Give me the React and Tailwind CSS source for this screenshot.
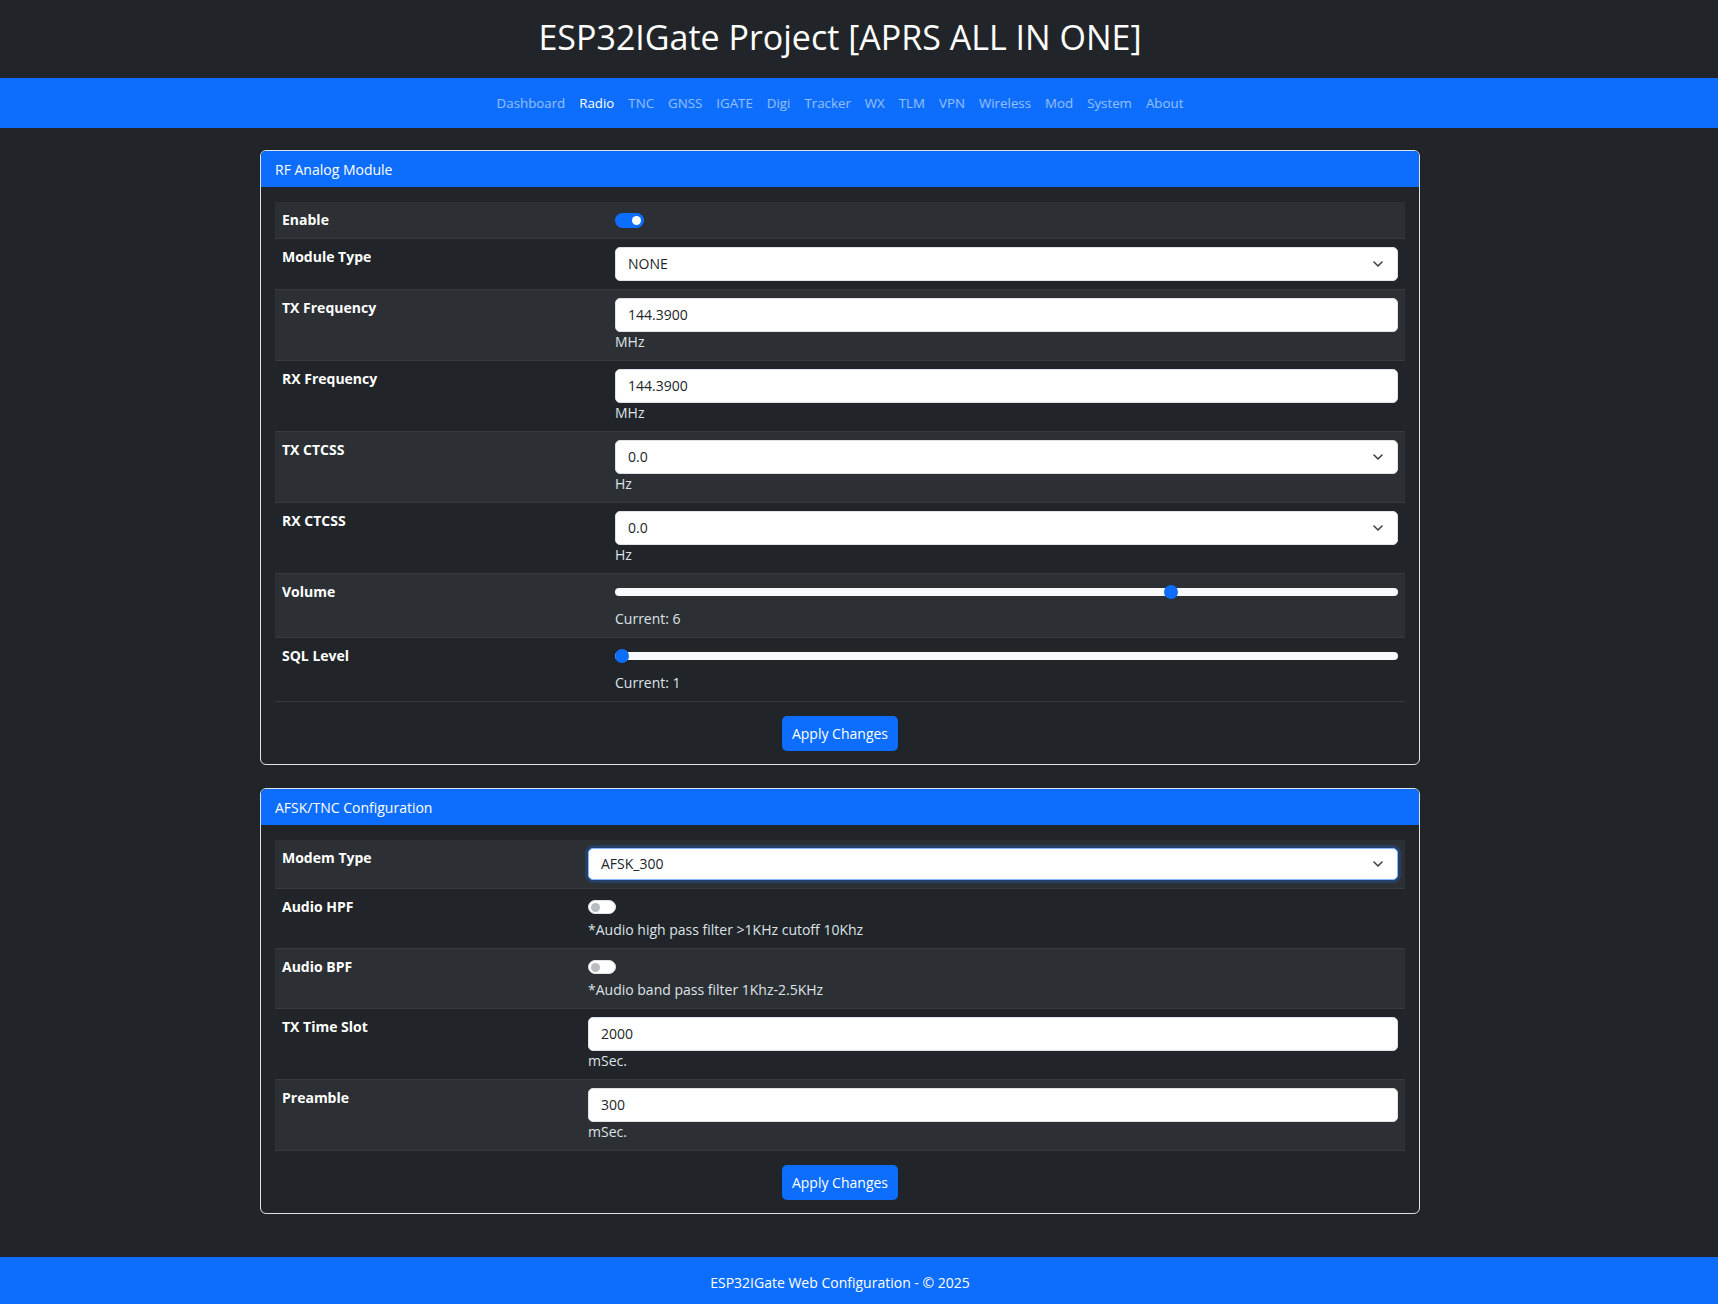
import React from "react";

const NAV = ["Dashboard", "Radio", "TNC", "GNSS", "IGATE", "Digi", "Tracker", "WX", "TLM", "VPN", "Wireless", "Mod", "System", "About"];

const Chevron = () => (
  <svg
    className="absolute right-[14px] top-1/2 -translate-y-1/2"
    width="10"
    height="6"
    viewBox="0 0 10 6"
    fill="none"
    stroke="#343a40"
    strokeWidth="1.5"
    strokeLinecap="round"
    strokeLinejoin="round"
  >
    <path d="M1 1l4 4 4-4" />
  </svg>
);

const Field = ({ value, select, focus, h = "h-[34px]" }) => (
  <div
    className={
      "relative w-full rounded-[5px] bg-white border flex items-center px-[12px] text-[#212529] " +
      h +
      " " +
      (focus
        ? "border-[#86b7fe] shadow-[0_0_0_3px_rgba(13,110,253,0.25)]"
        : "border-[#dee2e6]")
    }
  >
    {value}
    {select && <Chevron />}
  </div>
);

const Toggle = ({ on }) => (
  <div className="h-[20px] flex items-center">
    {on ? (
      <div className="w-[29px] h-[15px] rounded-full bg-[#0d6efd] flex items-center justify-end px-[3px]">
        <div className="w-[9px] h-[9px] rounded-full bg-white" />
      </div>
    ) : (
      <div className="w-[28px] h-[14px] rounded-full bg-white border border-[#dee2e6] flex items-center px-[2px]">
        <div className="w-[9px] h-[9px] rounded-full bg-[#b8bcc0]" />
      </div>
    )}
  </div>
);

const Range = ({ value, min, max }) => {
  const frac = (value - min) / (max - min);
  return (
    <div className="h-[20px] flex items-center">
      <div className="relative w-full h-[8px] rounded-full bg-[#f8f9fa]">
        <div
          className="absolute top-1/2 -translate-y-1/2 w-[14px] h-[14px] rounded-full bg-[#0d6efd]"
          style={{ left: `calc((100% - 14px) * ${frac})` }}
        />
      </div>
    </div>
  );
};

const Hint = ({ children, mt = "mt-0" }) => (
  <div className={"leading-[20px] text-[#dee2e6] " + mt}>{children}</div>
);

const Row = ({ label, striped, labelW, children }) => (
  <div className={"flex border-b border-[#373b3e] " + (striped ? "bg-[#2c3034]" : "")}>
    <div className={"px-[7px] py-2 font-bold text-white leading-[20px] shrink-0 " + labelW}>{label}</div>
    <div className="flex-1 px-[7px] py-2 leading-[20px]">{children}</div>
  </div>
);

const Card = ({ title, children }) => (
  <div className="border border-[#dee2e6] rounded-[6px] overflow-hidden">
    <div className="bg-[#0d6efd] text-white h-[36px] flex items-center px-[14px]">{title}</div>
    <div className="px-[14px] pt-[15px] pb-[13px]">
      {children}
      <div className="flex justify-center mt-[14px]">
        <button className="h-[35px] w-[116px] rounded-[5px] bg-[#0d6efd] text-white">Apply Changes</button>
      </div>
    </div>
  </div>
);

export default function App() {
  const w1 = "w-[333px]";
  const w2 = "w-[306px]";
  return (
    <div className="min-h-screen bg-[#212529] text-[#dee2e6] text-[14px] font-['Open_Sans',sans-serif]">
      {/* Header */}
      <header className="h-[78px] flex items-center justify-center pr-[38px] pb-[4px]">
        <h1 className="text-[34px] text-white leading-none">ESP32IGate Project [APRS ALL IN ONE]</h1>
      </header>

      {/* Nav */}
      <nav className="bg-[#0d6efd] h-[50px] flex items-center justify-center pr-[38px] pt-[2px] text-[13.3px]">
        {NAV.map((n) => (
          <a key={n} className={"px-[7px] " + (n === "Radio" ? "text-white" : "text-white/55")}>
            {n}
          </a>
        ))}
      </nav>

      <main className="pr-[38px] pt-[22px] pb-[43px]">
        <div className="w-[1160px] mx-auto flex flex-col gap-[23px]">
          <Card title="RF Analog Module">
            <Row label="Enable" striped labelW={w1}>
              <Toggle on />
            </Row>
            <Row label="Module Type" labelW={w1}>
              <Field value="NONE" select />
            </Row>
            <Row label="TX Frequency" striped labelW={w1}>
              <Field value="144.3900" />
              <Hint>MHz</Hint>
            </Row>
            <Row label="RX Frequency" labelW={w1}>
              <Field value="144.3900" />
              <Hint>MHz</Hint>
            </Row>
            <Row label="TX CTCSS" striped labelW={w1}>
              <Field value="0.0" select />
              <Hint>Hz</Hint>
            </Row>
            <Row label="RX CTCSS" labelW={w1}>
              <Field value="0.0" select />
              <Hint>Hz</Hint>
            </Row>
            <Row label="Volume" striped labelW={w1}>
              <Range value={6} min={1} max={8} />
              <Hint mt="mt-[7px]">Current: 6</Hint>
            </Row>
            <Row label="SQL Level" labelW={w1}>
              <Range value={1} min={1} max={8} />
              <Hint mt="mt-[7px]">Current: 1</Hint>
            </Row>
          </Card>

          <Card title="AFSK/TNC Configuration">
            <Row label="Modem Type" striped labelW={w2}>
              <Field value="AFSK_300" select focus h="h-[32px]" />
            </Row>
            <Row label="Audio HPF" labelW={w2}>
              <Toggle />
              <Hint mt="mt-[3px]">*Audio high pass filter &gt;1KHz cutoff 10Khz</Hint>
            </Row>
            <Row label="Audio BPF" striped labelW={w2}>
              <Toggle />
              <Hint mt="mt-[3px]">*Audio band pass filter 1Khz-2.5KHz</Hint>
            </Row>
            <Row label="TX Time Slot" labelW={w2}>
              <Field value="2000" />
              <Hint>mSec.</Hint>
            </Row>
            <Row label="Preamble" striped labelW={w2}>
              <Field value="300" />
              <Hint>mSec.</Hint>
            </Row>
          </Card>
        </div>
      </main>

      <footer className="bg-[#0d6efd] h-[47px] flex items-center justify-center pr-[38px] pt-[3px] text-white">
        ESP32IGate Web Configuration - © 2025
      </footer>
    </div>
  );
}
